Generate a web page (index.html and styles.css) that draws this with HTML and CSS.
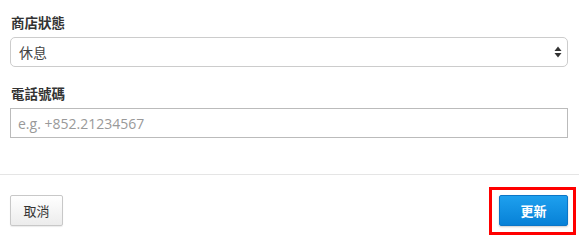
FILE: index.html
```html
<!DOCTYPE html>
<html lang="zh-Hant">
<head>
<meta charset="utf-8">
<link rel="stylesheet" href="styles.css">
</head>
<body>
<div class="form-body">
  <div class="field">
    <label class="label">商店狀態</label>
    <div class="select">
      <span class="select-value">休息</span>
      <svg class="select-arrows" width="8" height="12" viewBox="0 0 8 12"><path d="M4 0.5 L7.5 5 L0.5 5 Z" fill="#333"/><path d="M4 11.5 L7.5 7 L0.5 7 Z" fill="#333"/></svg>
    </div>
  </div>
  <div class="field field-second">
    <label class="label">電話號碼</label>
    <div class="input"><span class="placeholder">e.g. +852.21234567</span></div>
  </div>
</div>
<div class="footer">
  <button class="btn btn-default">取消</button>
  <div class="highlight">
    <button class="btn btn-primary">更新</button>
  </div>
</div>
</body>
</html>
```
FILE: styles.css
```css
html, body {
  margin: 0;
  padding: 0;
  background: #fff;
  width: 579px;
  height: 238px;
  overflow: hidden;
  font-family: "Open Sans", "Noto Sans CJK TC", sans-serif;
}
.form-body {
  padding: 12px 11px 0 10px;
}
.field {
  display: flex;
  flex-direction: column;
}
.field-second {
  margin-top: 16px;
}
.label {
  font-family: "Noto Sans CJK TC", sans-serif;
  font-size: 13.5px;
  font-weight: 700;
  line-height: 20px;
  color: #333;
  margin: 0 0 5px 1px;
}
.select {
  height: 30px;
  box-sizing: border-box;
  border: 1px solid #ccc;
  border-radius: 5px;
  display: flex;
  align-items: center;
  justify-content: space-between;
  padding: 0 5px 0 8px;
  background: #fff;
}
.select-value {
  font-family: "Noto Sans CJK TC", sans-serif;
  font-size: 14px;
  color: #444;
}
.select-arrows {
  display: block;
}
.input {
  height: 30px;
  box-sizing: border-box;
  border: 1px solid #bbb;
  display: flex;
  align-items: center;
  padding: 0 7px;
}
.placeholder {
  font-family: "Open Sans", sans-serif;
  font-size: 14px;
  color: #999;
}
.footer {
  margin-top: 36px;
  border-top: 1px solid #e5e5e5;
  padding: 12px 3px 0 10px;
  display: flex;
  justify-content: space-between;
  align-items: flex-start;
}
.btn {
  height: 31px;
  box-sizing: border-box;
  font-family: "Noto Sans CJK TC", sans-serif;
  font-size: 13px;
  line-height: 1;
  padding: 0;
  cursor: pointer;
}
.btn-default {
  margin-top: 8px;
  width: 53px;
  border: 1px solid #c8c8c8;
  border-radius: 2px;
  background: linear-gradient(#ffffff, #ececec);
  color: #333;
  box-shadow: 0 1px 1px rgba(0,0,0,0.08);
}
.highlight {
  border: 3px solid #ff0000;
  padding: 5px 5px 6px 7px;
}
.btn-primary {
  display: block;
  width: 69px;
  border: 1px solid #0b76c7;
  border-radius: 2px;
  background: linear-gradient(#1ea0ee, #0781d7);
  color: #fff;
  font-weight: 700;
  box-shadow: 0 1px 2px rgba(0,0,0,0.2);
}
```
